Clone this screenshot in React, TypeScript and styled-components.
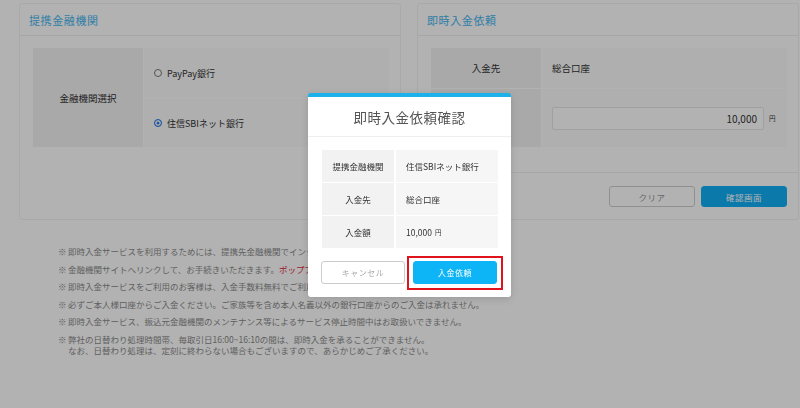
import React from 'react'
import styled, { createGlobalStyle } from 'styled-components'

const GlobalStyle = createGlobalStyle`
  html, body {
    margin: 0;
    background: #ffffff;
  }
  body {
    font-family: 'Noto Sans CJK JP', 'Noto Sans', sans-serif;
    color: #333333;
  }
`

const Page = styled.div`
  width: 800px;
  height: 408px;
  box-sizing: border-box;
  padding: 3px 0 0 19px;
  overflow: hidden;
`

const PanelRow = styled.div`
  display: flex;
  gap: 16px;
  align-items: stretch;
`

const Panel = styled.section`
  width: 382px;
  box-sizing: border-box;
  border: 1px solid #f2f2f2;
  border-radius: 3px;
  display: flex;
  flex-direction: column;
`

const PanelHeader = styled.h2`
  margin: 0;
  height: 31px;
  display: flex;
  align-items: center;
  padding: 0 9px;
  border-bottom: 1px solid #f0f0f0;
  font-size: 11px;
  font-weight: 400;
  letter-spacing: 0.6px;
  color: #45b6f0;
`

const PanelBody = styled.div<{ $bottom?: number }>`
  padding: 12px 11px ${(p) => p.$bottom ?? 0}px 13px;
`

const FormGrid = styled.div<{ $rows: string }>`
  display: grid;
  grid-template-columns: 110px 1fr;
  grid-template-rows: ${(p) => p.$rows};
  gap: 1px;
  background: #ffffff;
`

const LabelCell = styled.div<{ $span?: number }>`
  grid-row: span ${(p) => p.$span ?? 1};
  background: #f3f3f3;
  display: flex;
  align-items: center;
  justify-content: center;
  font-size: 9.5px;
  color: #333333;
`

const ValueCell = styled.div`
  background: #fbfbfb;
  display: flex;
  align-items: center;
  padding-left: 10px;
  font-size: 9.5px;
  color: #333333;
`

const RadioLabel = styled.label`
  display: flex;
  align-items: center;
  gap: 5px;
  font-size: 9px;
`

const RadioMark = styled.span<{ $checked?: boolean }>`
  width: 8px;
  height: 8px;
  box-sizing: border-box;
  border-radius: 50%;
  border: 1px solid ${(p) => (p.$checked ? '#2f7de1' : '#777777')};
  background: ${(p) => (p.$checked ? '#2f7de1' : '#ffffff')};
  box-shadow: ${(p) => (p.$checked ? 'inset 0 0 0 1.5px #ffffff' : 'none')};
`

const AmountBox = styled.div`
  width: 212px;
  height: 23px;
  box-sizing: border-box;
  border: 1px solid #e6e6e6;
  border-radius: 2px;
  background: #ffffff;
  display: flex;
  align-items: center;
  justify-content: flex-end;
  padding-right: 6px;
  font-size: 10px;
  color: #333333;
`

const Yen = styled.span<{ $gap?: number }>`
  font-size: 6.5px;
  margin-left: ${(p) => p.$gap ?? 5}px;
  color: #333333;
`

const ActionRow = styled.div`
  border-top: 1px solid #f0f0f0;
  display: flex;
  justify-content: flex-end;
  gap: 6px;
  padding: 13px 11px 12px;
`

const PageButton = styled.button<{ $primary?: boolean }>`
  width: 86px;
  height: 21px;
  border-radius: 3px;
  font-family: inherit;
  font-size: 8.5px;
  letter-spacing: 0.5px;
  border: 1px solid ${(p) => (p.$primary ? '#12aef5' : '#cfcfcf')};
  background: ${(p) => (p.$primary ? '#12aef5' : '#ffffff')};
  color: ${(p) => (p.$primary ? '#ffffff' : '#999999')};
`

const Notes = styled.ul`
  list-style: none;
  margin: 26px 0 0 39px;
  padding: 0;
  display: flex;
  flex-direction: column;
  gap: 6.5px;
`

const Note = styled.li`
  display: flex;
  font-size: 8.5px;
  line-height: 11px;
  color: #8a8a8a;
`

const NoteMark = styled.span`
  flex: 0 0 10px;
`

const LinkText = styled.span`
  color: #e0283c;
`

const Overlay = styled.div`
  position: fixed;
  inset: 0;
  background: rgba(0, 0, 0, 0.3);
  display: flex;
  justify-content: center;
  align-items: flex-start;
  padding: 93px 0 0 19px;
`

const Modal = styled.div`
  width: 203px;
  box-sizing: border-box;
  background: #ffffff;
  border-top: 4px solid #1cb1ea;
  border-radius: 3px;
  box-shadow: 0 2px 8px rgba(0, 0, 0, 0.15);
`

const ModalTitle = styled.h3`
  margin: 0;
  height: 39px;
  border-bottom: 1px solid #efefef;
  display: flex;
  align-items: center;
  justify-content: center;
  font-size: 13.5px;
  font-weight: 400;
  letter-spacing: 0.5px;
  color: #555555;
`

const ModalBody = styled.div`
  padding: 13px 13px 13px 14px;
`

const SummaryGrid = styled.div`
  display: grid;
  grid-template-columns: 72px 1fr;
  grid-auto-rows: 32px;
  gap: 1px 2px;
`

const SummaryLabel = styled.div`
  background: #f2f2f2;
  display: flex;
  align-items: center;
  justify-content: center;
  font-size: 8.5px;
  color: #333333;
`

const SummaryValue = styled.div`
  background: #f6f6f6;
  display: flex;
  align-items: center;
  padding-left: 10px;
  font-size: 8.5px;
  color: #333333;
`

const ModalActions = styled.div`
  display: flex;
  justify-content: space-between;
  padding: 13px 1px 0 0;
  margin-left: -1px;
`

const ModalButton = styled.button<{ $primary?: boolean; $marked?: boolean }>`
  position: relative;
  width: 84px;
  height: 23px;
  border-radius: 3px;
  font-family: inherit;
  font-size: 8px;
  letter-spacing: 0.5px;
  border: 1px solid ${(p) => (p.$primary ? '#0db4f6' : '#cccccc')};
  background: ${(p) => (p.$primary ? '#0db4f6' : '#ffffff')};
  color: ${(p) => (p.$primary ? '#ffffff' : '#aaaaaa')};

  &::after {
    content: '';
    display: ${(p) => (p.$marked ? 'block' : 'none')};
    position: absolute;
    inset: -6px -7px -7px -7px;
    border: 2px solid #e0121c;
    pointer-events: none;
  }
`

const summary = [
  { label: '提携金融機関', value: '住信SBIネット銀行' },
  { label: '入金先', value: '総合口座' },
]

export default function App() {
  return (
    <>
      <GlobalStyle />
      <Page>
        <PanelRow>
          <Panel>
            <PanelHeader>提携金融機関</PanelHeader>
            <PanelBody>
              <FormGrid $rows="50px 48px">
                <LabelCell $span={2}>金融機関選択</LabelCell>
                <ValueCell>
                  <RadioLabel>
                    <RadioMark />
                    PayPay銀行
                  </RadioLabel>
                </ValueCell>
                <ValueCell>
                  <RadioLabel>
                    <RadioMark $checked />
                    住信SBIネット銀行
                  </RadioLabel>
                </ValueCell>
              </FormGrid>
            </PanelBody>
          </Panel>
          <Panel>
            <PanelHeader>即時入金依頼</PanelHeader>
            <PanelBody $bottom={25}>
              <FormGrid $rows="40px 58px">
                <LabelCell>入金先</LabelCell>
                <ValueCell>総合口座</ValueCell>
                <LabelCell>入金額</LabelCell>
                <ValueCell>
                  <AmountBox>10,000</AmountBox>
                  <Yen>円</Yen>
                </ValueCell>
              </FormGrid>
            </PanelBody>
            <ActionRow>
              <PageButton>クリア</PageButton>
              <PageButton $primary>確認画面</PageButton>
            </ActionRow>
          </Panel>
        </PanelRow>
        <Notes>
          <Note>
            <NoteMark>※</NoteMark>
            <span>即時入金サービスを利用するためには、提携先金融機関でインターネット契約が必要です。</span>
          </Note>
          <Note>
            <NoteMark>※</NoteMark>
            <span>
              金融機関サイトへリンクして、お手続きいただきます。
              <LinkText>ポップアップブロックを解除してください</LinkText>。
            </span>
          </Note>
          <Note>
            <NoteMark>※</NoteMark>
            <span>即時入金サービスをご利用のお客様は、入金手数料無料でご利用いただけます。</span>
          </Note>
          <Note>
            <NoteMark>※</NoteMark>
            <span>必ずご本人様口座からご入金ください。ご家族等を含め本人名義以外の銀行口座からのご入金は承れません。</span>
          </Note>
          <Note>
            <NoteMark>※</NoteMark>
            <span>即時入金サービス、振込元金融機関のメンテナンス等によるサービス停止時間中はお取扱いできません。</span>
          </Note>
          <Note>
            <NoteMark>※</NoteMark>
            <span>
              弊社の日替わり処理時間帯、毎取引日16:00~16:10の間は、即時入金を承ることができません。
              <br />
              なお、日替わり処理は、定刻に終わらない場合もございますので、あらかじめご了承ください。
            </span>
          </Note>
        </Notes>
      </Page>
      <Overlay>
        <Modal>
          <ModalTitle>即時入金依頼確認</ModalTitle>
          <ModalBody>
            <SummaryGrid>
              {summary.map((row) => (
                <React.Fragment key={row.label}>
                  <SummaryLabel>{row.label}</SummaryLabel>
                  <SummaryValue>{row.value}</SummaryValue>
                </React.Fragment>
              ))}
              <SummaryLabel>入金額</SummaryLabel>
              <SummaryValue>
                10,000
                <Yen $gap={3}>円</Yen>
              </SummaryValue>
            </SummaryGrid>
            <ModalActions>
              <ModalButton>キャンセル</ModalButton>
              <ModalButton $primary $marked>
                入金依頼
              </ModalButton>
            </ModalActions>
          </ModalBody>
        </Modal>
      </Overlay>
    </>
  )
}
